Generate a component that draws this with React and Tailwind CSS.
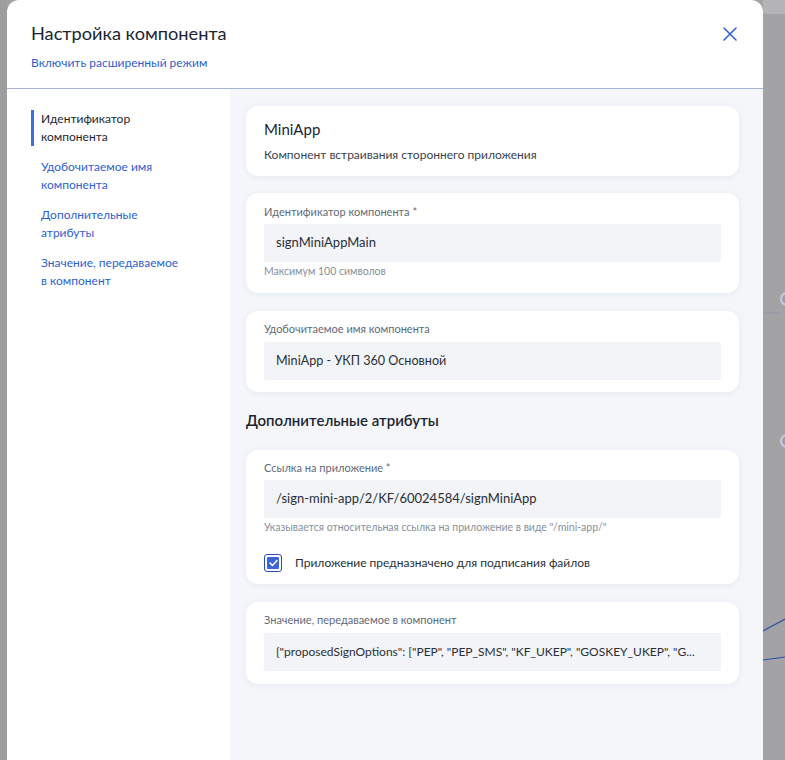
import React from "react";

const font = { fontFamily: "Lato, 'Noto Sans', sans-serif" };

function Card({ children, className = "" }) {
  return (
    <div className={"bg-white rounded-[12px] shadow-[0_1px_6px_rgba(30,50,90,0.07)] px-[18px] " + className}>
      {children}
    </div>
  );
}

function Label({ children }) {
  return <div className="text-[11px] leading-[14px] text-[#5f6b78]">{children}</div>;
}

function Input({ children, className = "" }) {
  return (
    <div className={"h-[38px] bg-[#f2f4f8] rounded-[2px] pl-[12px] flex items-center text-[#2a2f36] whitespace-nowrap overflow-hidden min-w-0 " + className}>
      {children}
    </div>
  );
}

function Hint({ children }) {
  return <div className="text-[10.5px] leading-[14px] text-[#86909c]">{children}</div>;
}

function NavItem({ active, lines }) {
  return (
    <div
      className={
        "border-l-[3px] pl-[7px] text-[12px] leading-[18px] " +
        (active ? "border-[#3d6ee0] text-[#1d2733]" : "border-transparent text-[#2e5fcb]")
      }
    >
      {lines.map((l, i) => (
        <div key={i}>{l}</div>
      ))}
    </div>
  );
}

export default function App() {
  return (
    <div className="h-[760px] w-full bg-[#a3a3a5] flex overflow-hidden" style={font}>
      <div className="w-[7px] shrink-0 bg-[#9d9d9f]" />
      <div className="w-[756px] shrink-0 bg-white rounded-t-[12px] flex flex-col overflow-hidden">
        <div className="h-[89px] shrink-0 border-b border-[#a7b2d2] flex justify-between pl-[24px] pr-[26px]">
          <div className="pt-[21px]">
            <div className="text-[18.2px] leading-[24px] text-[#1b2530]">Настройка компонента</div>
            <div className="mt-[10px] text-[12px] leading-[16px] text-[#2e5fcb]">Включить расширенный режим</div>
          </div>
          <div className="pt-[27px]">
            <svg width="14" height="14" viewBox="0 0 14 14" fill="none" stroke="#3263d0" strokeWidth="1.6" strokeLinecap="round">
              <path d="M1 1L13 13M13 1L1 13" />
            </svg>
          </div>
        </div>
        <div className="flex-1 flex min-w-0">
          <div className="w-[223px] shrink-0 bg-white pt-[21px] pl-[24px] flex flex-col gap-[12px]">
            <NavItem active lines={["Идентификатор", "компонента"]} />
            <NavItem lines={["Удобочитаемое имя", "компонента"]} />
            <NavItem lines={["Дополнительные", "атрибуты"]} />
            <NavItem lines={["Значение, передаваемое", "в компонент"]} />
          </div>
          <div className="flex-1 min-w-0 bg-[#f4f6fa] pl-[16px] pr-[24px] pt-[17px] flex flex-col">
            <Card className="pt-[13px] pb-[13px]">
              <div className="text-[15px] leading-[20px] text-[#1b2530]">MiniApp</div>
              <div className="mt-[8px] text-[12px] leading-[16px] text-[#3a424c]">Компонент встраивания стороннего приложения</div>
            </Card>
            <Card className="mt-[17px] pt-[12px] pb-[15px]">
              <Label>Идентификатор компонента *</Label>
              <Input className="mt-[5px] text-[13px]">signMiniAppMain</Input>
              <div className="mt-[2px]">
                <Hint>Максимум 100 символов</Hint>
              </div>
            </Card>
            <Card className="mt-[18px] pt-[11px] pb-[12px]">
              <Label>Удобочитаемое имя компонента</Label>
              <Input className="mt-[6px] h-[37px] text-[12.6px]">MiniApp - УКП 360 Основной</Input>
            </Card>
            <div className="mt-[18px] text-[15px] leading-[20px] font-semibold text-[#1b2530]">Дополнительные атрибуты</div>
            <Card className="mt-[20px] pt-[11px] pb-[11px]">
              <Label>Ссылка на приложение *</Label>
              <Input className="mt-[5px] text-[13px]">/sign-mini-app/2/KF/60024584/signMiniApp</Input>
              <div className="mt-[2px]">
                <Hint>Указывается относительная ссылка на приложение в виде "/mini-app/"</Hint>
              </div>
              <div className="mt-[19px] flex items-center gap-[13px] h-[20px]">
                <div className="w-[18px] h-[18px] rounded-[3px] border-[1.5px] border-[#2a4fbd] p-[2px] bg-white">
                  <div className="w-full h-full bg-[#3a66d8] rounded-[1px] flex items-center justify-center">
                    <svg width="9" height="8" viewBox="0 0 9 8" fill="none" stroke="white" strokeWidth="1.5" strokeLinecap="round" strokeLinejoin="round">
                      <path d="M1 4L3.5 6.5L8 1.5" />
                    </svg>
                  </div>
                </div>
                <div className="text-[12px] leading-[18px] text-[#2a2f36]">Приложение предназначено для подписания файлов</div>
              </div>
            </Card>
            <Card className="mt-[18px] pt-[11px] pb-[13px]">
              <Label>Значение, передаваемое в компонент</Label>
              <Input className="mt-[6px] text-[12px]">{'{"proposedSignOptions": ["PEP", "PEP_SMS", "KF_UKEP", "GOSKEY_UKEP", "G...'}</Input>
            </Card>
          </div>
        </div>
      </div>
      <div className="flex-1 relative">
        <svg width="22" height="760" viewBox="0 0 22 760" fill="none">
          <rect x="0" y="0" width="22" height="14" fill="#b4b4b6" />
          <line x1="0" y1="313" x2="18" y2="313" stroke="#8f96a8" strokeWidth="1" />
          <circle cx="24" cy="299" r="6" stroke="#c8ccd6" strokeWidth="2" fill="#9aa0b4" />
          <circle cx="24" cy="441" r="6" stroke="#c8ccd6" strokeWidth="2" fill="#9aa0b4" />
          <line x1="0" y1="631" x2="22" y2="619" stroke="#2c4fa8" strokeWidth="1.2" />
          <line x1="0" y1="660" x2="22" y2="657" stroke="#2c4fa8" strokeWidth="1.2" />
        </svg>
      </div>
    </div>
  );
}
